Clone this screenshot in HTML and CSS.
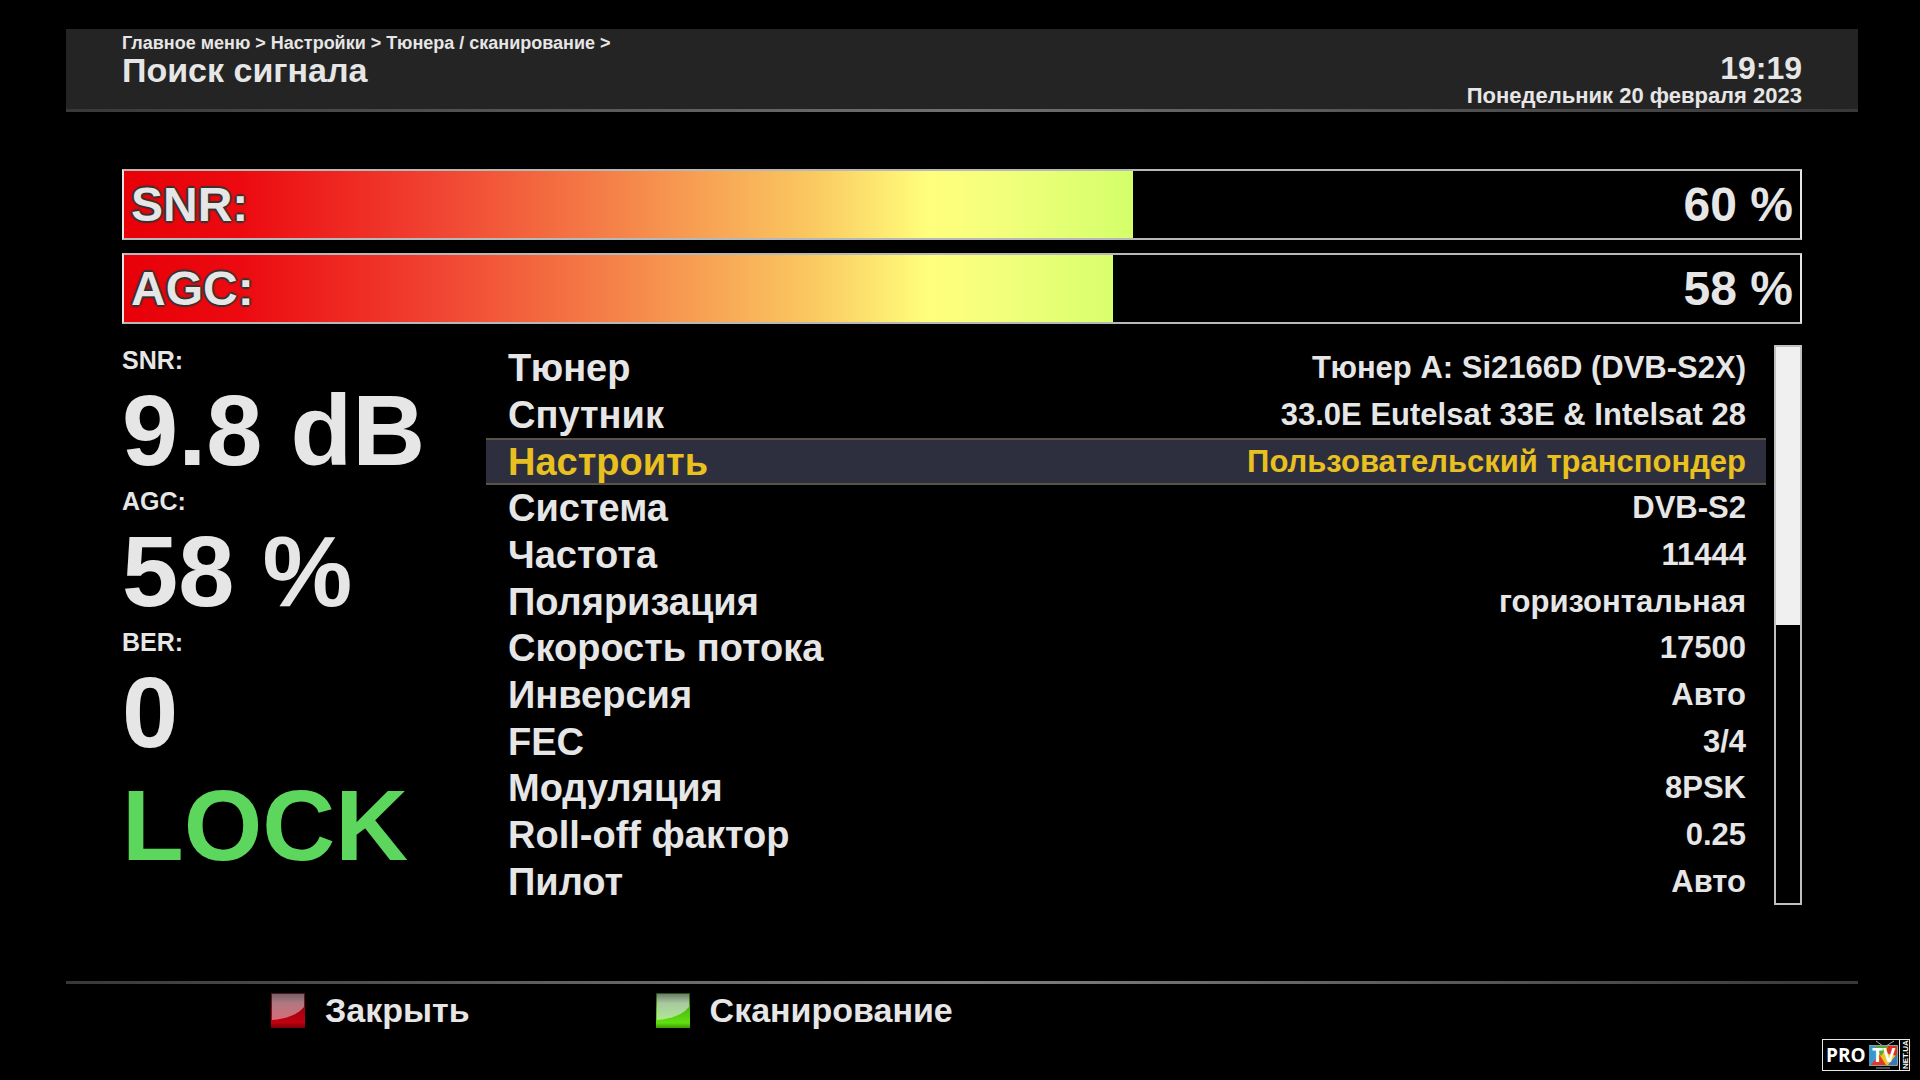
FILE: index.html
```html
<!DOCTYPE html>
<html lang="ru">
<head>
<meta charset="utf-8">
<meta name="viewport" content="width=device-width, initial-scale=1">
<title>Поиск сигнала</title>
<link rel="stylesheet" href="styles.css">
</head>
<body>
<header class="topbar">
  <div class="heading">
    <nav class="crumbs"><a href="#main">Главное меню</a> &gt; <a href="#settings">Настройки</a> &gt; <a href="#tuner">Тюнера / сканирование</a> &gt;</nav>
    <h1 class="title">Поиск сигнала</h1>
  </div>
  <div class="clock">
    <time class="time">19:19</time>
    <time class="date" datetime="2023-02-20">Понедельник 20 февраля 2023</time>
  </div>
</header>

<main class="content">
  <section class="meters">
    <div class="meter" style="--level: 60.2%"><span class="meter-name">SNR:</span><span>60 %</span></div>
    <div class="meter" style="--level: 59%"><span class="meter-name">AGC:</span><span>58 %</span></div>
  </section>

  <section class="panel">
    <div class="stats">
      <dl class="readings">
        <dt>SNR:</dt><dd>9.8 dB</dd>
        <dt>AGC:</dt><dd>58 %</dd>
        <dt>BER:</dt><dd>0</dd>
      </dl>
      <p class="lock">LOCK</p>
    </div>
    <table class="settings">
      <tbody>
        <tr><th scope="row">Тюнер</th><td>Тюнер A: Si2166D (DVB-S2X)</td></tr>
        <tr><th scope="row">Спутник</th><td>33.0E Eutelsat 33E &amp; Intelsat 28</td></tr>
        <tr class="selected"><th scope="row">Настроить</th><td>Пользовательский транспондер</td></tr>
        <tr><th scope="row">Система</th><td>DVB-S2</td></tr>
        <tr><th scope="row">Частота</th><td>11444</td></tr>
        <tr><th scope="row">Поляризация</th><td>горизонтальная</td></tr>
        <tr><th scope="row">Скорость потока</th><td>17500</td></tr>
        <tr><th scope="row">Инверсия</th><td>Авто</td></tr>
        <tr><th scope="row">FEC</th><td>3/4</td></tr>
        <tr><th scope="row">Модуляция</th><td>8PSK</td></tr>
        <tr><th scope="row">Roll-off фактор</th><td>0.25</td></tr>
        <tr><th scope="row">Пилот</th><td>Авто</td></tr>
      </tbody>
    </table>
    <div class="scroll"><div class="thumb"></div></div>
  </section>
</main>

<footer class="keys">
  <button class="key" type="button">
    <svg class="key-icon" viewBox="0 0 34 35" aria-hidden="true">
      <defs>
        <linearGradient id="red" x1="0" y1="0" x2="0" y2="1"><stop offset="0" stop-color="#4a1a1e"/><stop offset=".5" stop-color="#a80010"/><stop offset=".85" stop-color="#c00010"/><stop offset="1" stop-color="#700008"/></linearGradient>
        <linearGradient id="redGloss" x1="0" y1="0" x2="0" y2="1"><stop offset="0" stop-color="#75606a"/><stop offset=".35" stop-color="#b07880"/><stop offset="1" stop-color="#d86c78"/></linearGradient>
      </defs>
      <rect width="34" height="35" fill="url(#red)"/>
      <path d="M1 1H33V14Q24 25 1 27Z" fill="url(#redGloss)"/>
    </svg>
    Закрыть
  </button>
  <button class="key" type="button">
    <svg class="key-icon" viewBox="0 0 34 35" aria-hidden="true">
      <defs>
        <linearGradient id="green" x1="0" y1="0" x2="0" y2="1"><stop offset="0" stop-color="#2a4a1e"/><stop offset=".5" stop-color="#50c010"/><stop offset=".85" stop-color="#60e010"/><stop offset="1" stop-color="#409808"/></linearGradient>
        <linearGradient id="greenGloss" x1="0" y1="0" x2="0" y2="1"><stop offset="0" stop-color="#6c8068"/><stop offset=".35" stop-color="#a8c8a0"/><stop offset="1" stop-color="#b0e890"/></linearGradient>
      </defs>
      <rect width="34" height="35" fill="url(#green)"/>
      <path d="M1 1H33V14Q24 25 1 27Z" fill="url(#greenGloss)"/>
    </svg>
    Сканирование
  </button>
</footer>

<svg class="watermark" viewBox="0 0 88 32" role="img" aria-label="PRO TV NET.UA">
  <defs><clipPath id="screen"><rect x="47" y="7" width="28" height="19" rx="1"/></clipPath></defs>
  <rect x=".5" y=".5" width="87" height="31" fill="#000" stroke="#e8e8e8"/>
  <path d="M77.500 1V31" stroke="#e8e8e8"/>
  <text class="mark-pro" x="4" y="23">PRO</text>
  <path d="M54 2L61 7M72 2L64 7" stroke="#aaa" fill="none"/>
  <g clip-path="url(#screen)">
    <rect x="47" y="7" width="28" height="19" fill="#e8c820"/>
    <path d="M47 7H60L52 26H47Z" fill="#3898c8"/>
    <path d="M53 7H66L59 17Z" fill="#50a838"/>
    <path d="M66 7H75V17L63 14Z" fill="#d83020"/>
    <path d="M49 26L57 15L64 26Z" fill="#e03828"/>
    <path d="M66 26L75 15V26Z" fill="#3878c0"/>
  </g>
  <path d="M47 6.500H75.500V26.500H47M54 29H68" stroke="#999" fill="none"/>
  <text class="mark-tv" x="50" y="23">TV</text>
  <text class="mark-net" x="-30" y="86" transform="rotate(-90)">NET.UA</text>
</svg>
</body>
</html>
```
FILE: styles.css
```css
* {
  box-sizing: border-box;
}

body {
  display: flex;
  flex-direction: column;
  min-height: 100vh;
  margin: 0;
  padding: 29px 62px 0 66px;
  background: #000;
  color: #e6e6e6;
  font-family: "Liberation Sans", Arial, sans-serif;
  font-weight: bold;
  white-space: nowrap;
}

.topbar {
  display: flex;
  justify-content: space-between;
  padding: 4px 56px 0;
  background: #242424;
  border-bottom: 3px solid;
  border-image: linear-gradient(to right, #383838, #707070 50%, #383838) 1;
}

.crumbs {
  font-size: 18px;
  line-height: 20px;
}

.crumbs a {
  color: inherit;
  text-decoration: none;
}

.title {
  margin: 0;
  font-size: 34px;
  line-height: 34px;
}

.clock {
  display: flex;
  flex-direction: column;
  padding: 19px 0 1px;
  text-align: right;
}

.time {
  font-size: 32px;
  line-height: 32px;
}

.date {
  font-size: 22px;
  line-height: 24px;
}

.content {
  padding: 57px 56px 0;
}

.meters {
  display: grid;
  gap: 13px;
}

.meter {
  display: flex;
  justify-content: space-between;
  padding: 0 7px;
  border: 2px solid #e6e6e6;
  border-color: #b8b8b8 #e6e6e6;
  background:
    linear-gradient(to right, transparent var(--level), #000 var(--level)),
    linear-gradient(to right, #e80008, #ec0a10 7%, #f04030 18%, #f58048 29%, #fac860 41%, #ffff7c 48%, #f4ff7c 52%, #d0ff68 61%);
  font-size: 48px;
  line-height: 67px;
}

.meter-name {
  text-shadow: 2px 0 1px #333, -2px 0 1px #333, 0 2px 1px #333, 0 -2px 1px #333;
}

.panel {
  display: grid;
  grid-template-columns: 364px 1fr 28px;
  margin-top: 21px;
}

.stats {
  padding-top: 1px;
}

.readings,
.readings dd,
.lock {
  margin: 0;
}

.readings dt {
  font-size: 25px;
  line-height: 28px;
}

.readings dd,
.lock {
  font-size: 101px;
  line-height: 113px;
}

.lock {
  color: #5cd65c;
}

.settings {
  height: 560px;
  margin-right: 8px;
  border-collapse: collapse;
}

.settings th,
.settings td {
  padding: 0 20px 0 22px;
  vertical-align: middle;
}

.settings th {
  font-size: 38px;
  line-height: 40px;
  text-align: left;
}

.settings td {
  font-size: 31px;
  line-height: 40px;
  text-align: right;
}

.selected {
  background: #2e2f3e;
  box-shadow: inset 0 2px #5c5248, inset 0 -2px #5c5248;
  color: #e8c020;
}

.scroll {
  border: 2px solid #c0c0c0;
}

.thumb {
  height: 50%;
  background: #f0f0f0;
}

.keys {
  display: flex;
  gap: 186px;
  margin-top: 76px;
  padding: 5px 205px 0;
  border-top: 3px solid;
  border-image: linear-gradient(to right, #383838, #808080 50%, #383838) 1;
}

.key {
  display: flex;
  align-items: center;
  gap: 20px;
  padding: 0;
  border: 0;
  background: none;
  color: inherit;
  font: inherit;
  font-size: 34px;
  line-height: 42px;
}

.key-icon {
  width: 34px;
  height: 35px;
}

.watermark {
  position: absolute;
  right: 10px;
  bottom: 9px;
  width: 88px;
  height: 32px;
}

.mark-pro,
.mark-tv {
  fill: #fff;
  font-family: "Open Sans", sans-serif;
  font-size: 19px;
}

.mark-net {
  fill: #fff;
  font-size: 8px;
}
```
